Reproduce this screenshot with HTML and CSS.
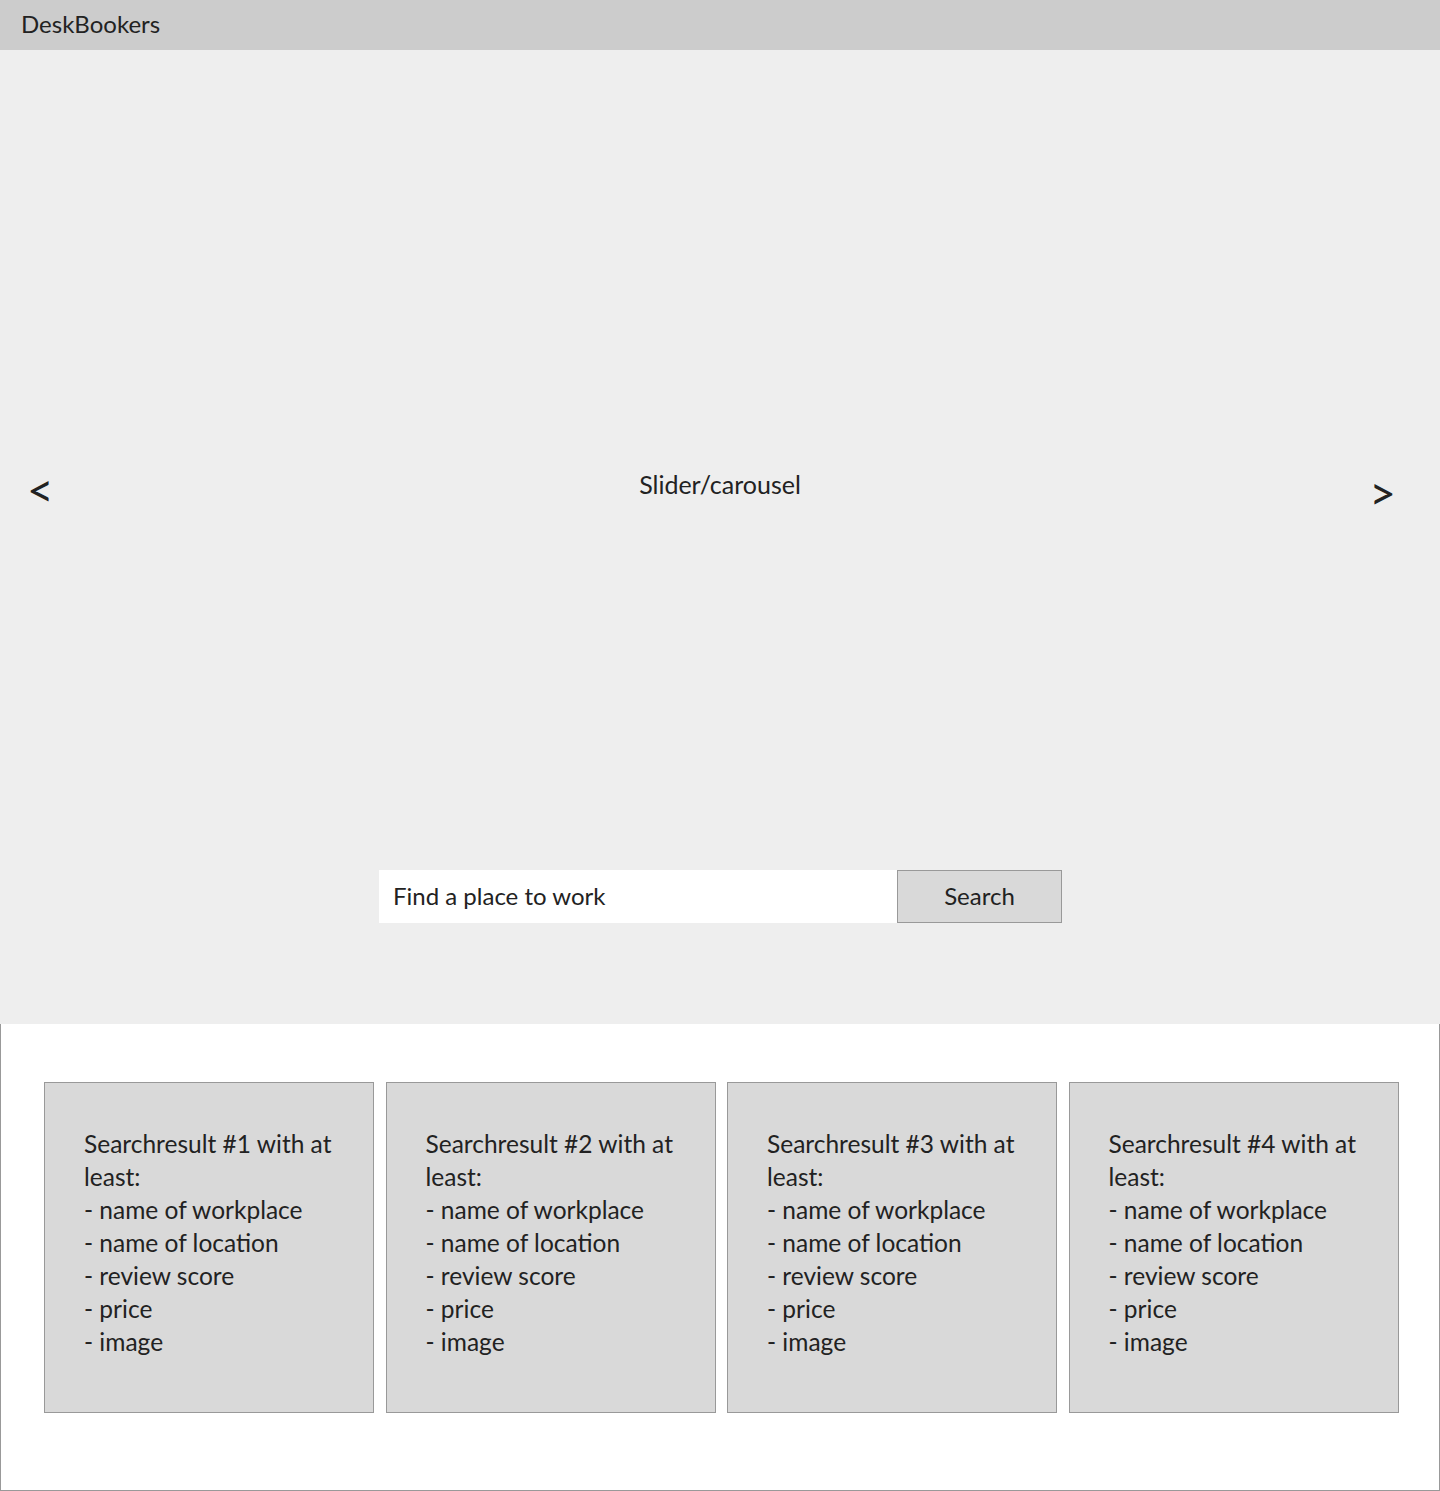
FILE: index.html
```html
<!DOCTYPE html>
<html>
<head>
<meta charset="utf-8">
<title>DeskBookers</title>
<link rel="stylesheet" href="styles.css">
</head>
<body>
<header class="topbar"><span class="brand">DeskBookers</span></header>
<section class="hero">
  <div class="slider">
    <span class="arrow arrow-left">&lt;</span>
    <span class="slider-label">Slider/carousel</span>
    <span class="arrow arrow-right">&gt;</span>
  </div>
  <form class="search">
    <div class="search-input">Find a place to work</div>
    <div class="search-button">Search</div>
  </form>
</section>
<section class="results">
  <div class="card">Searchresult #1 with at<br>least:<br>- name of workplace<br>- name of location<br>- review score<br>- price<br>- image</div>
  <div class="card">Searchresult #2 with at<br>least:<br>- name of workplace<br>- name of location<br>- review score<br>- price<br>- image</div>
  <div class="card">Searchresult #3 with at<br>least:<br>- name of workplace<br>- name of location<br>- review score<br>- price<br>- image</div>
  <div class="card">Searchresult #4 with at<br>least:<br>- name of workplace<br>- name of location<br>- review score<br>- price<br>- image</div>
</section>
</body>
</html>
```
FILE: styles.css
```css
* { box-sizing: border-box; }
html, body { margin: 0; padding: 0; }
body {
  font-family: Lato, "Open Sans", sans-serif;
  color: #222;
  background: #fff;
  width: 1440px;
}
.topbar {
  height: 50px;
  background: #cccccc;
  display: flex;
  align-items: center;
  padding: 0 0 3px 21px;
}
.brand { font-size: 24px; }
.hero {
  background: #eeeeee;
  height: 974px;
  display: flex;
  flex-direction: column;
}
.slider {
  margin-top: 412px;
  height: 40px;
  display: grid;
  grid-template-columns: 1fr auto 1fr;
  align-items: center;
  padding: 0 27px;
}
.slider-label { font-size: 25px; margin-top: -10px; }
.arrow { font-size: 46px; line-height: 1; }
.arrow-left { margin-top: 2px; justify-self: start; }
.arrow-right { margin: 8px 17px 0 0; justify-self: end; }
.search {
  margin: 368px 0 0 379px;
  display: flex;
  height: 53px;
}
.search-input {
  width: 518px;
  background: #fff;
  font-size: 24px;
  padding: 0 0 3px 14px;
  display: flex;
  align-items: center;
}
.search-button {
  width: 165px;
  background: #d9d9d9;
  border: 1px solid #999;
  font-size: 24px;
  padding-bottom: 3px;
  display: flex;
  align-items: center;
  justify-content: center;
}
.results {
  height: 467px;
  border: 1px solid #999;
  border-top: none;
  display: flex;
  gap: 11.5px;
  padding: 58px 0 0 43px;
}
.card {
  width: 330px;
  height: 331px;
  background: #d9d9d9;
  border: 1px solid #999;
  padding: 44px 0 0 39px;
  font-size: 24.5px;
  line-height: 33px;
  white-space: nowrap;
}
```
